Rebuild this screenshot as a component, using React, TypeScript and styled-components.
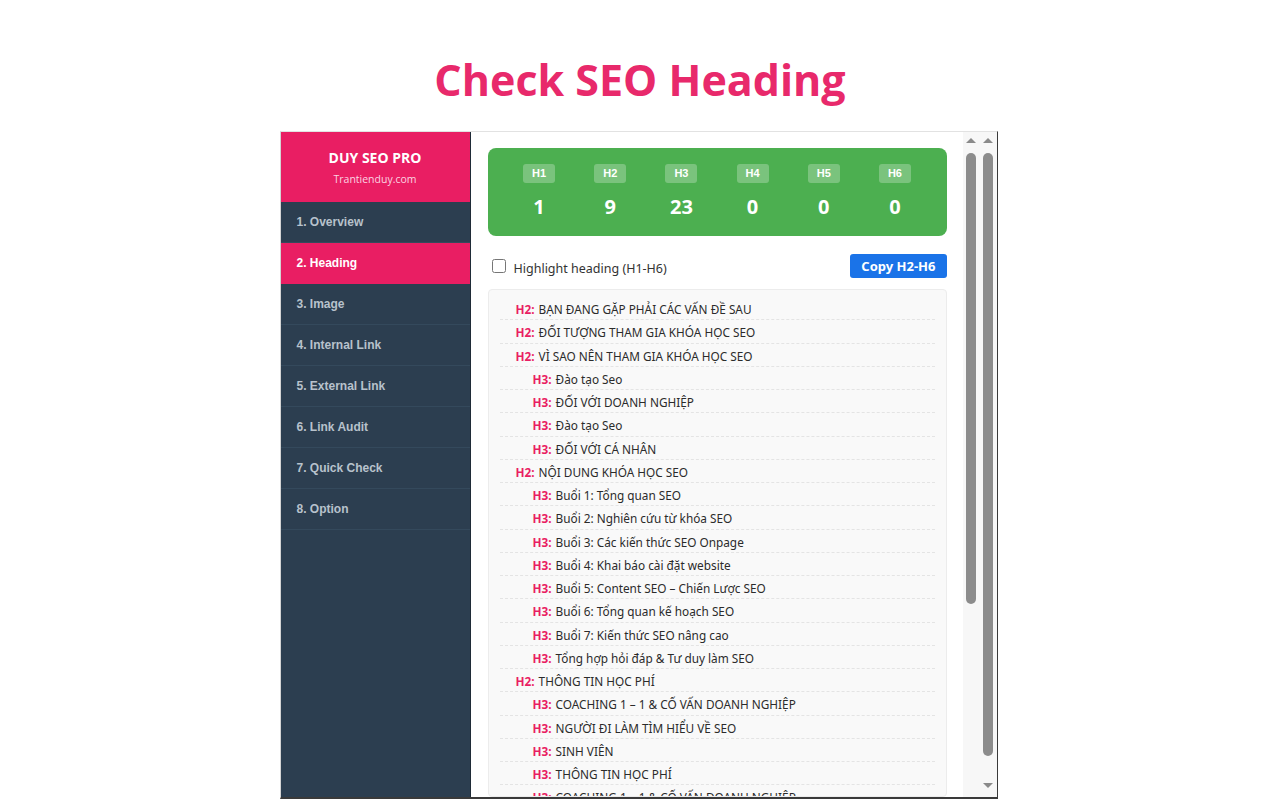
import styled, { createGlobalStyle } from 'styled-components';

const GlobalStyle = createGlobalStyle`
  html, body {
    margin: 0;
    padding: 0;
    background: #ffffff;
    height: 800px;
    overflow: hidden;
  }
  * { box-sizing: border-box; }
`;

// trang
const Page = styled.div`
  width: 1280px;
  height: 800px;
  display: flex;
  flex-direction: column;
  align-items: center;
`;

const Title = styled.h1`
  margin: 0;
  height: 131px;
  padding-top: 52px;
  font-family: 'Open Sans', 'Noto Sans', sans-serif;
  font-weight: 700;
  font-size: 43px;
  line-height: 56px;
  color: #e8296b;
  text-align: center;
`;

// khung popup
const Frame = styled.div`
  width: 718px;
  height: 668px;
  margin-right: 3px;
  display: flex;
  border-top: 1px solid #e2e2e2;
  border-left: 1px solid #d4d4d4;
  border-right: 1px solid #3a3a3a;
  border-bottom: 2px solid #3a3a3a;
  overflow: hidden;
  background: #fff;
`;

const Sidebar = styled.nav`
  width: 190px;
  flex-shrink: 0;
  background: #2c3e50;
  border-right: 1px solid #1f2b37;
  display: flex;
  flex-direction: column;
`;

const Brand = styled.div`
  height: 70px;
  background: #e91e63;
  display: flex;
  flex-direction: column;
  align-items: center;
  justify-content: center;
  gap: 5px;
`;

const BrandName = styled.div`
  font-family: 'Open Sans', 'Noto Sans', sans-serif;
  font-weight: 700;
  font-size: 14px;
  line-height: 18px;
  color: #fff;
`;

const BrandSite = styled.div`
  font-family: 'Open Sans', 'Noto Sans', sans-serif;
  font-size: 10.5px;
  line-height: 14px;
  color: #fbd3e1;
`;

const MenuItem = styled.div<{ active?: boolean }>`
  height: 41px;
  display: flex;
  align-items: center;
  padding-left: 16px;
  border-bottom: 1px solid ${p => (p.active ? '#e91e63' : '#34495c')};
  background: ${p => (p.active ? '#e91e63' : 'transparent')};
  font-family: 'Liberation Sans', Arial, sans-serif;
  font-weight: 700;
  font-size: 12px;
  color: ${p => (p.active ? '#ffffff' : '#b8c2cc')};
`;

const Main = styled.div`
  flex: 1;
  padding: 16px 16px 0 17px;
  display: flex;
  flex-direction: column;
  min-width: 0;
`;

const Stats = styled.div`
  height: 88px;
  background: #4caf50;
  border-radius: 8px;
  padding: 16px 16px 0;
  display: grid;
  grid-template-columns: repeat(6, 1fr);
`;

const Stat = styled.div`
  display: flex;
  flex-direction: column;
  align-items: center;
`;

const StatTag = styled.span`
  height: 19px;
  padding: 0 9px;
  border-radius: 3px;
  background: rgba(255, 255, 255, 0.26);
  font-family: 'Liberation Sans', Arial, sans-serif;
  font-weight: 700;
  font-size: 11px;
  line-height: 19px;
  color: #fff;
`;

const StatValue = styled.span`
  margin-top: 11px;
  font-family: 'Open Sans', 'Noto Sans', sans-serif;
  font-weight: 700;
  font-size: 20px;
  line-height: 26px;
  color: #fff;
`;

const Controls = styled.div`
  margin-top: 18px;
  height: 24px;
  display: flex;
  align-items: center;
  justify-content: space-between;
`;

const CheckLabel = styled.label`
  display: flex;
  align-items: center;
  gap: 8px;
  padding-left: 4px;
  padding-top: 4px;
  font-family: 'Noto Sans', 'Open Sans', sans-serif;
  font-size: 12.5px;
  color: #333;

  input {
    margin: 0;
    width: 14px;
    height: 14px;
    position: relative;
    top: -2px;
  }
`;

const CopyButton = styled.button`
  height: 24px;
  padding: 0 11px;
  border: none;
  border-radius: 3px;
  background: #1a73e8;
  font-family: 'Noto Sans', 'Open Sans', sans-serif;
  font-weight: 700;
  font-size: 13px;
  color: #fff;
`;

const HeadingList = styled.div`
  margin-top: 11px;
  flex: 1;
  background: #f9f9f9;
  border: 1px solid #ececec;
  border-radius: 4px;
  padding: 7px 11px 0;
  overflow: hidden;
`;

const Row = styled.div<{ level: number }>`
  padding: 5px 0 2px ${p => (p.level === 2 ? 16 : 33)}px;
  line-height: 15.25px;
  border-bottom: 1px dashed #e4e4e4;
  font-family: 'Noto Sans', 'Open Sans', sans-serif;
  font-size: 11.8px;
  color: #2b2b2b;
  white-space: nowrap;
`;

const Level = styled.b`
  color: #e91e63;
  font-weight: 700;
  margin-right: 4px;
`;

// thanh cuộn
const ScrollTrack = styled.div`
  width: 17px;
  flex-shrink: 0;
  background: #f7f7f7;
  display: flex;
  flex-direction: column;
  align-items: center;
  padding-top: 6px;
`;

const Arrow = styled.div<{ down?: boolean }>`
  width: 0;
  height: 0;
  border-left: 5px solid transparent;
  border-right: 5px solid transparent;
  ${p => (p.down ? 'border-top: 5px solid #8a8a8a;' : 'border-bottom: 5px solid #8a8a8a;')}
`;

const Thumb = styled.div<{ length: number }>`
  margin-top: 10px;
  width: 10px;
  height: ${p => p.length}px;
  border-radius: 5px;
  background: #8c8c8c;
`;

const Spacer = styled.div`
  flex: 1;
`;

const BottomArrow = styled.div`
  padding-bottom: 9px;
`;

const stats = [
  ['H1', 1],
  ['H2', 9],
  ['H3', 23],
  ['H4', 0],
  ['H5', 0],
  ['H6', 0],
] as const;

const menu = [
  '1. Overview',
  '2. Heading',
  '3. Image',
  '4. Internal Link',
  '5. External Link',
  '6. Link Audit',
  '7. Quick Check',
  '8. Option',
];

const headings: [number, string][] = [
  [2, 'BẠN ĐANG GẶP PHẢI CÁC VẤN ĐỀ SAU'],
  [2, 'ĐỐI TƯỢNG THAM GIA KHÓA HỌC SEO'],
  [2, 'VÌ SAO NÊN THAM GIA KHÓA HỌC SEO'],
  [3, 'Đào tạo Seo'],
  [3, 'ĐỐI VỚI DOANH NGHIỆP'],
  [3, 'Đào tạo Seo'],
  [3, 'ĐỐI VỚI CÁ NHÂN'],
  [2, 'NỘI DUNG KHÓA HỌC SEO'],
  [3, 'Buổi 1: Tổng quan SEO'],
  [3, 'Buổi 2: Nghiên cứu từ khóa SEO'],
  [3, 'Buổi 3: Các kiến thức SEO Onpage'],
  [3, 'Buổi 4: Khai báo cài đặt website'],
  [3, 'Buổi 5: Content SEO – Chiến Lược SEO'],
  [3, 'Buổi 6: Tổng quan kế hoạch SEO'],
  [3, 'Buổi 7: Kiến thức SEO nâng cao'],
  [3, 'Tổng hợp hỏi đáp & Tư duy làm SEO'],
  [2, 'THÔNG TIN HỌC PHÍ'],
  [3, 'COACHING 1 – 1 & CỐ VẤN DOANH NGHIỆP'],
  [3, 'NGƯỜI ĐI LÀM TÌM HIỂU VỀ SEO'],
  [3, 'SINH VIÊN'],
  [3, 'THÔNG TIN HỌC PHÍ'],
  [3, 'COACHING 1 – 1 & CỐ VẤN DOANH NGHIỆP'],
];

export default function App() {
  return (
    <>
      <GlobalStyle />
      <Page>
        <Title>Check SEO Heading</Title>
        <Frame>
          <Sidebar>
            <Brand>
              <BrandName>DUY SEO PRO</BrandName>
              <BrandSite>Trantienduy.com</BrandSite>
            </Brand>
            {menu.map(item => (
              <MenuItem key={item} active={item === '2. Heading'}>
                {item}
              </MenuItem>
            ))}
          </Sidebar>
          <Main>
            <Stats>
              {stats.map(([tag, value]) => (
                <Stat key={tag}>
                  <StatTag>{tag}</StatTag>
                  <StatValue>{value}</StatValue>
                </Stat>
              ))}
            </Stats>
            <Controls>
              <CheckLabel>
                <input type="checkbox" />
                Highlight heading (H1-H6)
              </CheckLabel>
              <CopyButton>Copy H2-H6</CopyButton>
            </Controls>
            <HeadingList>
              {headings.map(([level, text], i) => (
                <Row key={i} level={level}>
                  <Level>H{level}:</Level>
                  {text}
                </Row>
              ))}
            </HeadingList>
          </Main>
          <ScrollTrack>
            <Arrow />
            <Thumb length={451} />
          </ScrollTrack>
          <ScrollTrack>
            <Arrow />
            <Thumb length={603} />
            <Spacer />
            <BottomArrow>
              <Arrow down />
            </BottomArrow>
          </ScrollTrack>
        </Frame>
      </Page>
    </>
  );
}
